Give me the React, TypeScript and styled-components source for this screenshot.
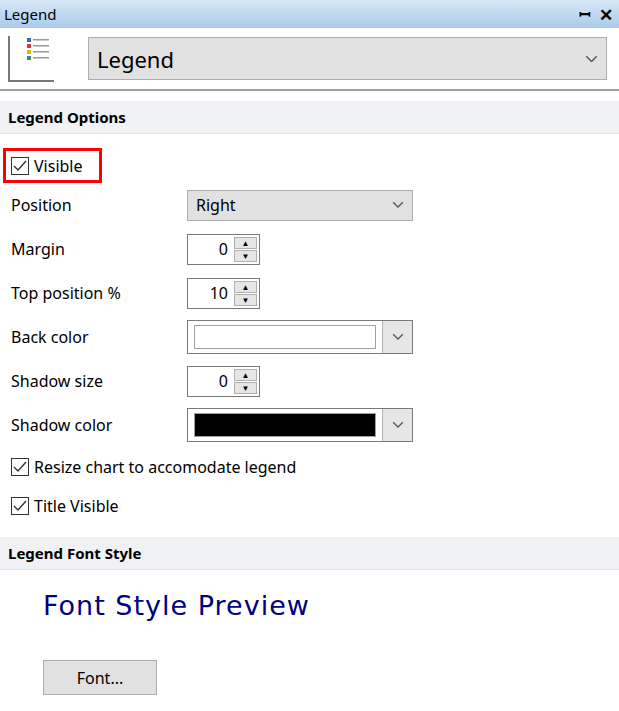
import React from 'react'
import styled, { createGlobalStyle } from 'styled-components'

const Global = createGlobalStyle`
  body { margin: 0; background: #fff; font-family: "Noto Sans", "Open Sans", sans-serif; color: #000; }
  * { box-sizing: border-box; }
`

const Panel = styled.div`
  width: 619px;
  height: 711px;
  overflow: hidden;
  background: #fff;
`

const TitleBar = styled.div`
  height: 28px;
  display: flex;
  align-items: center;
  justify-content: space-between;
  padding: 0 6px 0 4px;
  background: linear-gradient(#d9e8f6, #a8caec);
  font-size: 15px;
`

const TitleButtons = styled.div`
  display: flex;
  gap: 8px;
  align-items: center;
  font-weight: bold;
  font-size: 17px;
`

const Toolbar = styled.div`
  height: 63px;
  display: flex;
  align-items: center;
  gap: 32px;
  padding: 0 12px 0 6px;
  border-bottom: 2px solid #a0a0a0;
`

const Combo = styled.div<{ $h: number; $fs: number }>`
  flex: 1;
  height: ${p => p.$h}px;
  display: flex;
  align-items: center;
  justify-content: space-between;
  padding: 0 8px;
  background: #e1e1e1;
  border: 1px solid #adadad;
  font-size: ${p => p.$fs}px;
`

const SectionHeader = styled.div`
  height: 33px;
  display: flex;
  align-items: center;
  padding-left: 8px;
  background: #f0f1f5;
  border-bottom: 1px solid #e2e3e8;
  font-weight: bold;
  font-size: 15px;
`

const Body = styled.div`
  padding: 14px 0 12px 3px;
  display: flex;
  flex-direction: column;
`

const CheckRow = styled.label<{ $boxed?: boolean }>`
  display: flex;
  align-items: center;
  gap: 5px;
  height: ${p => (p.$boxed ? 35 : 39)}px;
  width: ${p => (p.$boxed ? '99px' : 'fit-content')};
  padding: 0 6px 0 5px;
  font-size: 16px;
  border: 3px solid ${p => (p.$boxed ? '#f00' : 'transparent')};
`

const Box = styled.span`
  width: 18px;
  height: 18px;
  border: 1px solid #333;
  display: flex;
  align-items: center;
  justify-content: center;
  background: #fff;
`

const FieldRow = styled.div`
  display: grid;
  grid-template-columns: 176px 226px;
  align-items: center;
  height: 44px;
  padding-left: 8px;
  font-size: 16px;
`

const Spin = styled.div`
  width: 73px;
  height: 31px;
  display: flex;
  align-items: center;
  border: 1px solid #7a7a7a;
  background: #fff;
`

const SpinValue = styled.span`
  flex: 1;
  text-align: right;
  padding-right: 6px;
  font-size: 16px;
`

const SpinButtons = styled.div`
  display: flex;
  flex-direction: column;
  width: 23px;
  margin-right: 2px;
  gap: 1px;
`

const SpinBtn = styled.div`
  height: 12px;
  background: #e6e6e6;
  border: 1px solid #b0b0b0;
  display: flex;
  align-items: center;
  justify-content: center;
  font-size: 8px;
`

const ColorCombo = styled.div`
  height: 34px;
  display: flex;
  border: 1px solid #7a7a7a;
  background: #fff;
`

const Swatch = styled.div<{ $c: string }>`
  flex: 1;
  margin: 4px 6px;
  background: ${p => p.$c};
  border: 1px solid #a0a0a0;
`

const DropBtn = styled.div`
  width: 30px;
  display: flex;
  align-items: center;
  justify-content: center;
  background: #e6e6e6;
  border-left: 1px solid #b0b0b0;
`

const FontArea = styled.div`
  padding: 20px 0 0 43px;
`

const Preview = styled.div`
  font-family: "DejaVu Sans", Verdana, sans-serif;
  font-size: 27px;
  letter-spacing: 1px;
  color: #000080;
  height: 70px;
`

const FontButton = styled.div`
  width: 114px;
  height: 35px;
  display: flex;
  align-items: center;
  justify-content: center;
  background: #e1e1e1;
  border: 1px solid #adadad;
  font-size: 16px;
`

const Chevron = ({ size = 12 }: { size?: number }) => (
  <svg width={size} height={size * 0.6} viewBox="0 0 10 6">
    <path d="M1 1l4 4 4-4" fill="none" stroke="#555" strokeWidth="1.1" />
  </svg>
)

const Check = () => (
  <svg width="14" height="12" viewBox="0 0 14 12">
    <path d="M1 6l4 4 8-9" fill="none" stroke="#333" strokeWidth="1.4" />
  </svg>
)

const LegendIcon = () => (
  <svg width="50" height="50" viewBox="0 0 50 50">
    <path d="M3 2v45h45" fill="none" stroke="#777" strokeWidth="2" />
    {['#2b72c4', '#d33', '#f0b400', '#3a8a7a'].map((c, i) => (
      <g key={c}>
        <rect x="21" y={4 + i * 6} width="4" height="4" fill={c} />
        <rect x="27" y={5 + i * 6} width="16" height="1.5" fill="#999" />
      </g>
    ))}
  </svg>
)

const Checkbox = ({ label, boxed }: { label: string; boxed?: boolean }) => (
  <CheckRow $boxed={boxed}>
    <Box><Check /></Box>
    {label}
  </CheckRow>
)

const SpinBox = ({ value }: { value: string }) => (
  <Spin>
    <SpinValue>{value}</SpinValue>
    <SpinButtons>
      <SpinBtn>▲</SpinBtn>
      <SpinBtn>▼</SpinBtn>
    </SpinButtons>
  </Spin>
)

const ColorPicker = ({ color }: { color: string }) => (
  <ColorCombo>
    <Swatch $c={color} />
    <DropBtn><Chevron /></DropBtn>
  </ColorCombo>
)

export default function App() {
  return (
    <Panel>
      <Global />
      <TitleBar>
        <span>Legend</span>
        <TitleButtons>
          <span style={{ fontSize: 15 }}>ꟷ</span>
          <span>✕</span>
        </TitleButtons>
      </TitleBar>
      <Toolbar>
        <LegendIcon />
        <Combo $h={43} $fs={22}>
          Legend
          <Chevron size={13} />
        </Combo>
      </Toolbar>
      <div style={{ height: 10 }} />
      <SectionHeader>Legend Options</SectionHeader>
      <Body>
        <Checkbox label="Visible" boxed />
        <FieldRow>
          <span>Position</span>
          <Combo $h={31} $fs={16}>
            Right
            <Chevron />
          </Combo>
        </FieldRow>
        <FieldRow>
          <span>Margin</span>
          <SpinBox value="0" />
        </FieldRow>
        <FieldRow>
          <span>Top position %</span>
          <SpinBox value="10" />
        </FieldRow>
        <FieldRow>
          <span>Back color</span>
          <ColorPicker color="#fff" />
        </FieldRow>
        <FieldRow>
          <span>Shadow size</span>
          <SpinBox value="0" />
        </FieldRow>
        <FieldRow>
          <span>Shadow color</span>
          <ColorPicker color="#000" />
        </FieldRow>
        <Checkbox label="Resize chart to accomodate legend" />
        <Checkbox label="Title Visible" />
      </Body>
      <SectionHeader>Legend Font Style</SectionHeader>
      <FontArea>
        <Preview>Font Style Preview</Preview>
        <FontButton>Font...</FontButton>
      </FontArea>
    </Panel>
  )
}
